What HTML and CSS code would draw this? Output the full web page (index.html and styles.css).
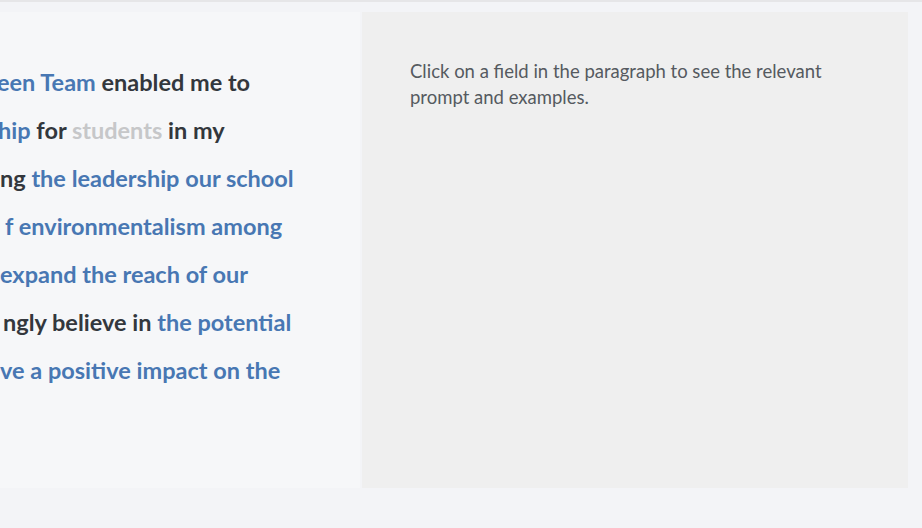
FILE: index.html
```html
<!DOCTYPE html>
<html>
<head>
<meta charset="utf-8">
<link rel="stylesheet" href="styles.css">
</head>
<body>
<div class="topline"></div>
<div class="layout">
  <div class="card">
    <p class="para">
      <span class="line l-cut"><span class="f">een Team</span> enabled me to</span>
      <span class="line l-cut2"><span class="f">hip</span> for <span class="empty">students</span> in my</span>
      <span class="line">ng <span class="f">the leadership our school</span></span>
      <span class="line l-in"><span class="f">f environmentalism among</span></span>
      <span class="line"><span class="f">expand the reach of our</span></span>
      <span class="line l-in2">ngly believe in <span class="f">the potential</span></span>
      <span class="line"><span class="f">ve a positive impact on the</span></span>
    </p>
  </div>
  <div class="panel">
    <p class="hint">Click on a field in the paragraph to see the relevant prompt and examples.</p>
  </div>
</div>
</body>
</html>
```

FILE: styles.css
```css
html, body {
  margin: 0;
  padding: 0;
}
body {
  background: #f3f4f7;
  width: 922px;
  height: 528px;
  overflow: hidden;
  font-family: Lato, "Open Sans", sans-serif;
}
.topline {
  height: 2px;
  background: #e6e6e8;
}
.layout {
  display: flex;
  gap: 2px;
  padding-top: 10px;
}
.card {
  width: 360px;
  height: 476px;
  background: #f6f7f9;
  overflow: hidden;
  box-sizing: border-box;
  padding-top: 46px;
}
.para {
  margin: 0;
  font-weight: 700;
  font-size: 23.5px;
  line-height: 48px;
  color: #33373d;
  white-space: nowrap;
}
.line {
  display: block;
}
.l-cut {
  margin-left: -3px;
}
.l-cut2 {
  margin-left: -2px;
}
.l-in {
  padding-left: 5px;
}
.l-in2 {
  padding-left: 3px;
}
.f {
  color: #4877b3;
}
.empty {
  color: #c6c7c9;
}
.panel {
  width: 546px;
  height: 476px;
  background: #efefef;
  box-sizing: border-box;
  padding: 46px 60px 0 48px;
}
.hint {
  margin: 0;
  font-size: 18.5px;
  line-height: 26px;
  color: #555a60;
}
```
